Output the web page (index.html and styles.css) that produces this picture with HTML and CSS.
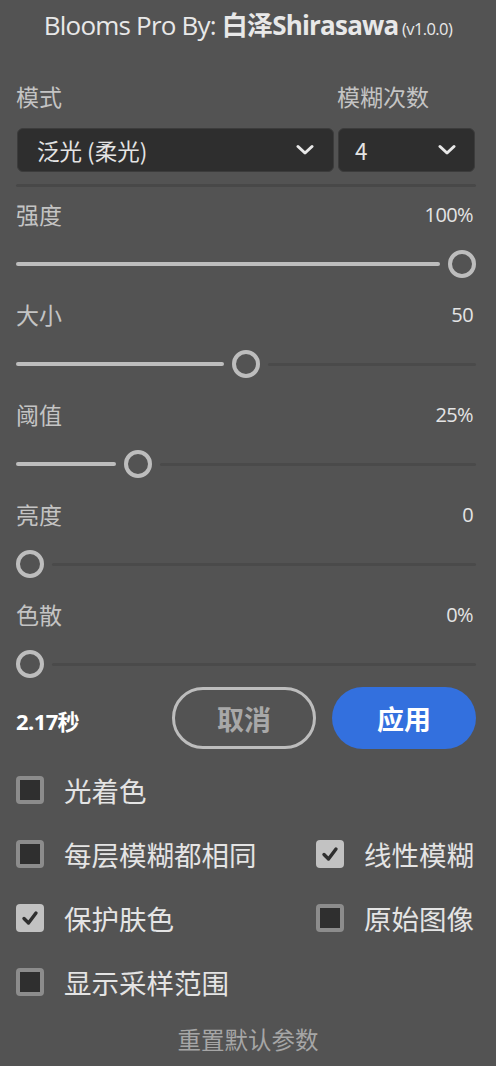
FILE: index.html
```html
<!DOCTYPE html>
<html lang="zh">
<head>
<meta charset="utf-8">
<link rel="stylesheet" href="styles.css">
</head>
<body>
<div class="panel">
  <div class="title"><span class="t-reg">Blooms Pro By: </span><span class="t-bold">白泽Shirasawa</span> <span class="t-ver">(v1.0.0)</span></div>

  <div class="sel-labels">
    <span class="lab-main">模式</span>
    <span class="lab-count">模糊次数</span>
  </div>
  <div class="selects">
    <div class="select sel-main"><span>泛光 (柔光)</span><svg class="chev" width="18" height="12" viewBox="0 0 18 12"><path d="M2 2.5 L9 9 L16 2.5" fill="none" stroke="#e8e8e8" stroke-width="3" stroke-linecap="round" stroke-linejoin="round"/></svg></div>
    <div class="select sel-count"><span>4</span><svg class="chev" width="18" height="12" viewBox="0 0 18 12"><path d="M2 2.5 L9 9 L16 2.5" fill="none" stroke="#e8e8e8" stroke-width="3" stroke-linecap="round" stroke-linejoin="round"/></svg></div>
  </div>
  <div class="sep"></div>

  <div class="sliders">
    <div class="sl">
      <div class="sl-head"><span class="sl-label">强度</span><span class="sl-val">100%</span></div>
      <div class="track"><div class="fill" style="width:424px"></div><div class="thumb"></div></div>
    </div>
    <div class="sl">
      <div class="sl-head"><span class="sl-label">大小</span><span class="sl-val">50</span></div>
      <div class="track"><div class="fill" style="width:208px"></div><div class="thumb"></div><div class="rest"></div></div>
    </div>
    <div class="sl">
      <div class="sl-head"><span class="sl-label">阈值</span><span class="sl-val">25%</span></div>
      <div class="track"><div class="fill" style="width:100px"></div><div class="thumb"></div><div class="rest"></div></div>
    </div>
    <div class="sl">
      <div class="sl-head"><span class="sl-label">亮度</span><span class="sl-val">0</span></div>
      <div class="track"><div class="thumb"></div><div class="rest"></div></div>
    </div>
    <div class="sl">
      <div class="sl-head"><span class="sl-label">色散</span><span class="sl-val">0%</span></div>
      <div class="track"><div class="thumb"></div><div class="rest"></div></div>
    </div>
  </div>

  <div class="actions">
    <span class="time">2.17秒</span>
    <div class="btns">
      <div class="btn btn-cancel">取消</div>
      <div class="btn btn-apply">应用</div>
    </div>
  </div>

  <div class="checks">
    <div class="chk"><span class="box"></span><span class="chk-text">光着色</span></div>
    <div class="chk"></div>
    <div class="chk"><span class="box"></span><span class="chk-text">每层模糊都相同</span></div>
    <div class="chk"><span class="box on"><svg width="22" height="22" viewBox="0 0 22 22"><path d="M5 11.5 L9.5 16 L17 6" fill="none" stroke="#2f2f2f" stroke-width="3.4" stroke-linecap="round" stroke-linejoin="round"/></svg></span><span class="chk-text">线性模糊</span></div>
    <div class="chk"><span class="box on"><svg width="22" height="22" viewBox="0 0 22 22"><path d="M5 11.5 L9.5 16 L17 6" fill="none" stroke="#2f2f2f" stroke-width="3.4" stroke-linecap="round" stroke-linejoin="round"/></svg></span><span class="chk-text">保护肤色</span></div>
    <div class="chk"><span class="box"></span><span class="chk-text">原始图像</span></div>
    <div class="chk"><span class="box"></span><span class="chk-text">显示采样范围</span></div>
    <div class="chk"></div>
  </div>

  <div class="reset">重置默认参数</div>
</div>
</body>
</html>
```

FILE: styles.css
```css
html, body {
  margin: 0;
  padding: 0;
  background: #535353;
}
body {
  font-family: "Noto Sans CJK SC", "Noto Sans", sans-serif;
  color: #e0e0e0;
  width: 496px;
  height: 1066px;
  overflow: hidden;
}
.panel {
  padding: 0 20px 0 16px;
}
.title {
  height: 52px;
  line-height: 50px;
  text-align: center;
  padding-left: 4px;
  white-space: nowrap;
  color: #e8e8e8;
}
.t-reg {
  font-family: "Open Sans", "Noto Sans CJK SC", sans-serif;
  font-size: 26px;
  letter-spacing: -0.8px;
}
.t-bold {
  font-family: "Open Sans", "Noto Sans CJK SC", sans-serif;
  font-size: 26px;
  font-weight: 700;
  letter-spacing: -0.8px;
}
.t-ver {
  font-family: "Open Sans", sans-serif;
  font-size: 16.5px;
  letter-spacing: -0.6px;
}
.sel-labels {
  height: 76px;
  box-sizing: border-box;
  display: flex;
  align-items: center;
  padding-top: 12px;
  font-size: 23px;
  color: #c4c4c4;
}
.lab-main {
  width: 321px;
}
.selects {
  display: flex;
  gap: 4px;
  padding-left: 1px;
}
.select {
  height: 44px;
  box-sizing: border-box;
  background: #2e2e2e;
  border: 1px solid #3c3c3c;
  border-radius: 6px;
  display: flex;
  align-items: center;
  justify-content: space-between;
  font-size: 22.5px;
  color: #e4e4e4;
}
.sel-main {
  width: 317px;
  padding: 0 19px 0 19px;
}
.sel-count {
  width: 137px;
  padding: 0 18px 0 16px;
}
.chev {
  display: block;
}
.sep {
  margin-top: 12px;
  height: 3px;
  border-radius: 2px;
  background: #484848;
}
.sliders {
  margin-top: 2px;
}
.sl {
  height: 100px;
}
.sl-head {
  height: 50px;
  display: flex;
  align-items: center;
  justify-content: space-between;
}
.sl-label {
  font-size: 23px;
  color: #c4c4c4;
}
.sl-val {
  font-family: "Open Sans", sans-serif;
  font-size: 20px;
  letter-spacing: -0.6px;
  color: #e4e4e4;
  margin-right: 3px;
}
.track {
  height: 50px;
  display: flex;
  align-items: center;
  gap: 8px;
}
.fill {
  height: 4px;
  border-radius: 2px;
  background: #bdbdbd;
  flex: none;
}
.thumb {
  width: 28px;
  height: 28px;
  box-sizing: border-box;
  border: 4px solid #bdbdbd;
  border-radius: 50%;
  flex: none;
}
.rest {
  flex: 1;
  height: 3px;
  border-radius: 2px;
  background: #4a4a4a;
}
.actions {
  margin-top: -2px;
  height: 62px;
  display: flex;
  align-items: center;
  justify-content: space-between;
}
.time {
  font-family: "Open Sans", "Noto Sans CJK SC", sans-serif;
  font-size: 22px;
  font-weight: 700;
  letter-spacing: -0.6px;
  color: #ffffff;
  margin-top: 4px;
}
.btns {
  display: flex;
  gap: 16px;
}
.btn {
  width: 144px;
  height: 62px;
  box-sizing: border-box;
  border-radius: 31px;
  display: flex;
  align-items: center;
  justify-content: center;
  font-size: 27px;
  font-weight: 700;
}
.btn-cancel {
  border: 3px solid #bdbdbd;
  color: #a8a8a8;
}
.btn-apply {
  background: #3370de;
  color: #ffffff;
}
.checks {
  margin-top: 9px;
  display: grid;
  grid-template-columns: 300px 1fr;
  grid-auto-rows: 64px;
}
.chk {
  display: flex;
  align-items: center;
}
.box {
  width: 28px;
  height: 28px;
  box-sizing: border-box;
  border: 4px solid #8c8c8c;
  background: #2f2f2f;
  border-radius: 4px;
  display: flex;
  align-items: center;
  justify-content: center;
  flex: none;
}
.box.on {
  border: none;
  background: #c2c2c2;
}
.box svg {
  display: block;
}
.chk-text {
  margin-left: 20px;
  font-size: 27.5px;
  color: #e4e4e4;
}
.reset {
  height: 50px;
  display: flex;
  align-items: center;
  justify-content: center;
  font-size: 23.5px;
  color: #a6a6a6;
  padding-left: 4px;
}
```
